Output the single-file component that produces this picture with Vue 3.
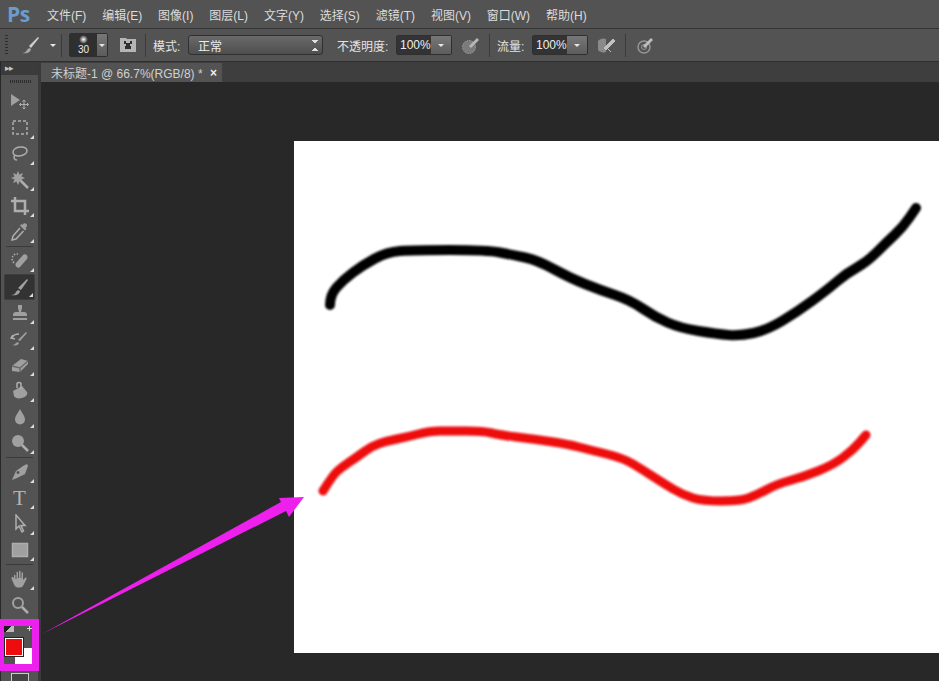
<script setup>
const menus = ['文件(F)', '编辑(E)', '图像(I)', '图层(L)', '文字(Y)', '选择(S)', '滤镜(T)', '视图(V)', '窗口(W)', '帮助(H)']

// 工具栏图标 viewBox 0 0 20 20，d 为填充，s 为描边
const tools = [
  { d: 'M1 2l9 6-9 6z', s: 'M14 8v9M9.500 12.500h9M12.500 9.500L14 8l1.500 1.500M12.500 15.500L14 17l1.500-1.500M11 11l-1.500 1.500L11 14M17 11l1.500 1.500L17 14', thin: true, more: false },
  { s: 'M3 3h14v13H3z', dash: '3 2', more: true },
  { s: 'M3 8c0-3 4-5 8-5s6 1.500 6 4-4 5-8 5-6-1-6-4zM5 11c-2 2-1 5 2 5', more: true },
  { d: 'M8 1l1.500 3.500L13 3l-1.500 3.500L15 8l-3.500 1.500L13 13l-3.500-1.500L8 15l-1.500-3.500L3 13l1.500-3.500L1 8l3.500-1.500L3 3l3.500 1.500z', s: 'M11 11l7 7', wide: true, more: true },
  { s: 'M5 1v14h14M1 5h14v14', wide: true, more: true },
  { d: 'M13 2c1.500-1.500 4-.5 4 1.500 0 1-.5 1.500-1.500 2.500l1 1-1.500 1.500-5-5L11.500 2l1 1z', s: 'M10 6L3 14l-1 4 4-1 7.500-8', more: true, sepAfter: true },
  { d: 'M6 12l7-8c2-2 6 1 4 4l-7 8c-2 2-6-1-4-4z', s: 'M4 12C0 8 3 2 8 3', dash: '1.500 1.500', more: true },
  { d: 'M1 18c3 0 4-1 5-3 1-2 3-2 4-1-.5 3-3 5-9 4zM11 13l-3-2 9-9 1 1z', more: true, active: true },
  { d: 'M8 2h4v3l-1 4h3c2 0 3 1 3 3v1H3v-1c0-2 1-3 3-3h3L8 5zM3 15h14v2H3z', more: true },
  { d: 'M2 16c2 0 3-1 4-2 1-1 2-1 3 0-.5 2-3 3-7 2zM10 12l-2-1 8-8 1 1z', s: 'M2 9c1-3 4-4 7-4M3 6L1 9l4 1', more: true },
  { d: 'M2 11l9-7 7 2v3l-8 8-8-1z', s: 'M2 11l8 2 8-7M10 13v4', dark: true, more: true },
  { d: 'M3 10l9-5 5 6c1 2-1 5-5 6-4 1-7 0-8-2z', s: 'M7 7V3c0-2 4-2 4 0v5', more: true },
  { d: 'M10 2c2 4 5 7 5 10.500a5 5 0 0 1-10 0C5 9 8 6 10 2z', more: true },
  { d: 'M8 2a6 6 0 1 1 0 12A6 6 0 0 1 8 2z', s: 'M12 12l6 6', wide: true, more: true, sepAfter: true },
  { d: 'M17 2l1 2-3 8-8 4-5 2 4-9 7-5zM8 9a1.500 1.500 0 1 0 .01 0z', more: true },
  { text: 'T', more: true },
  { s: 'M6 1v14l3-3 3 6 1.500-1-2.500-5.500h4z', more: true },
  { d: 'M3 4h14v12H3z', s: 'M2.500 3.500h15v13h-15z', more: true, sepAfter: true },
  { d: 'M4 10V6.500c0-1 1.500-1 1.500 0V10h1V3.500c0-1 1.500-1 1.500 0V9h1V2.500c0-1 1.500-1 1.500 0V9h1V4c0-1 1.500-1 1.500 0v7l2-2c1-1 2 0 1.500 1l-3 6c-1 2-2 2.500-4 2.500H8c-2 0-3-1-4-3L1.500 9.500c-.5-1 1-2 2-1z', more: true },
  { d: 'M8 2a6 6 0 1 1 0 12A6 6 0 0 1 8 2zm0 2a4 4 0 1 0 0 8 4 4 0 0 0 0-8z', s: 'M12 12l6 6', wide: true, more: false }
]

// 笔触坐标，取平滑中点
const smooth = (pts) => {
  let d = `M${pts[0][0]} ${pts[0][1]}`
  for (let i = 1; i < pts.length - 1; i++) {
    const mx = (pts[i][0] + pts[i + 1][0]) / 2
    const my = (pts[i][1] + pts[i + 1][1]) / 2
    d += ` Q${pts[i][0]} ${pts[i][1]} ${mx} ${my}`
  }
  const last = pts[pts.length - 1]
  return d + ` L${last[0]} ${last[1]}`
}

const blackStroke = smooth([[330, 305], [330, 295], [343, 280], [363, 265], [387, 252], [413, 250], [487, 250], [513, 255], [537, 260], [570, 278], [600, 290], [630, 300], [655, 317], [680, 328], [717, 334], [740, 336], [767, 330], [797, 312], [827, 290], [847, 273], [867, 262], [887, 242], [903, 227], [916, 208]])
const redStroke = smooth([[323, 491], [333, 475], [342, 467], [357, 457], [372, 446], [387, 441], [407, 437], [430, 431], [450, 431], [483, 431], [500, 435], [533, 439], [567, 444], [590, 450], [623, 458], [643, 470], [663, 483], [683, 495], [703, 501], [740, 501], [757, 495], [777, 484], [803, 477], [833, 465], [853, 450], [866, 435]])
</script>

<template>
  <div class="app">
    <header class="menu-bar">
      <span class="logo">Ps</span>
      <ul class="menu">
        <li v-for="item in menus" :key="item">{{ item }}</li>
      </ul>
    </header>

    <div class="options">
      <span class="grip"></span>
      <svg class="opt-brush" viewBox="0 0 20 20" width="20" height="20">
        <path d="M1 18c3 0 4-1 5-3 1-2 3-2 4-1-.5 3-3 5-9 4z" fill="#a8a8a8" />
        <path d="M10 13l-2-2 9-9 1 1z" fill="#cfcfcf" />
      </svg>
      <span class="caret caret-brush"></span>
      <span class="sep"></span>
      <div class="preset">
        <div class="preset-main">
          <span class="dot"></span>
          <span class="size">30</span>
        </div>
        <div class="drop"><span class="caret"></span></div>
      </div>
      <svg class="opt-folder" viewBox="0 0 16 16" width="16" height="16">
        <path d="M0 1h6l1 1h9v13H0z" fill="#b5b5b5" />
        <path d="M4 4h2v2h4V4h2v3h-2v2h1v3H5V9h1V7H4z" fill="#2e2e2e" />
      </svg>
      <span class="sep sep-b"></span>
      <span class="label label-mode">模式:</span>
      <div class="select">
        <span>正常</span>
        <span class="updown"></span>
      </div>
      <span class="label label-opacity">不透明度:</span>
      <div class="num">
        <span class="num-val">100%</span>
        <span class="drop"><span class="caret"></span></span>
      </div>
      <svg class="opt-icon ic-a" viewBox="0 0 18 18" width="18" height="18">
        <circle cx="7" cy="11" r="6.500" fill="#7b7b7b" stroke="#a0a0a0" stroke-dasharray="1.500 1" />
        <path d="M7 10l8-8 2 2-8 8z" fill="#b8b8b8" />
      </svg>
      <span class="sep sep-c"></span>
      <span class="label label-flow">流量:</span>
      <div class="num">
        <span class="num-val">100%</span>
        <span class="drop"><span class="caret"></span></span>
      </div>
      <svg class="opt-icon ic-b" viewBox="0 0 18 18" width="18" height="18">
        <path d="M8 3a7 7 0 1 0 0 13z" fill="#8a8a8a" />
        <path d="M6 12l9-9 2 2-9 9zM10 13l3 3" fill="#c0c0c0" stroke="#c0c0c0" />
      </svg>
      <span class="sep sep-d"></span>
      <svg class="opt-icon ic-c" viewBox="0 0 18 18" width="18" height="18">
        <circle cx="8" cy="11" r="6" fill="none" stroke="#969696" stroke-width="1.500" />
        <circle cx="8" cy="11" r="2.500" fill="none" stroke="#969696" />
        <path d="M7 10l8-8 2 2-8 8z" fill="#bdbdbd" />
      </svg>
    </div>

    <div class="workspace">
      <aside class="toolbox">
        <div class="tool-head"><span class="arrows">▸▸</span></div>
        <div class="tool-grip"></div>
        <template v-for="(tool, i) in tools" :key="i">
          <div class="tool" :class="{ active: tool.active }">
            <span v-if="tool.text" class="tool-t">{{ tool.text }}</span>
            <svg v-else viewBox="0 0 20 20" width="20" height="20">
              <path v-if="tool.d" :d="tool.d" fill="#a0a0a0" fill-rule="evenodd" />
              <path
                v-if="tool.s"
                :d="tool.s"
                fill="none"
                :stroke="tool.dark ? '#6a6a6a' : '#aeaeae'"
                :stroke-width="tool.wide ? 2.500 : tool.thin ? 1 : 1.500"
                :stroke-dasharray="tool.dash"
              />
            </svg>
            <span v-if="tool.more" class="more"></span>
          </div>
          <div v-if="tool.sepAfter" class="tool-sep"></div>
        </template>
        <div class="colors">
          <span class="mini-default"></span>
          <span class="mini-swap"></span>
          <span class="bg-swatch"></span>
          <span class="fg-swatch"></span>
        </div>
        <div class="mask-btn"><span></span></div>
      </aside>
      <span class="gutter"></span>
      <main class="doc">
        <div class="tabs">
          <div class="tab">
            <span>未标题-1 @ 66.7%(RGB/8) *</span>
            <span class="close">×</span>
          </div>
        </div>
        <div class="stage">
          <div class="paper">
            <svg class="strokes" viewBox="294 141 645 512">
              <defs>
                <filter id="soft" x="-5%" y="-10%" width="110%" height="120%">
                  <feGaussianBlur stdDeviation="1.300" />
                </filter>
              </defs>
              <path :d="blackStroke" class="stroke-black" filter="url(#soft)" />
              <path :d="redStroke" class="stroke-red" filter="url(#soft)" />
            </svg>
          </div>
        </div>
      </main>
    </div>

    <!-- 标注：粉色框和箭头 -->
    <div class="mark-box"></div>
    <svg class="mark-arrow" viewBox="0 0 939 681">
      <polygon points="42,634 281,502 279,498 304,497 289,517 286,511" fill="#ee20ee" />
    </svg>
  </div>
</template>

<style>
html, body {
  margin: 0;
  background: #282828;
}
</style>

<style scoped>
.app {
  position: relative;
  width: 939px;
  height: 681px;
  overflow: hidden;
  display: flex;
  flex-direction: column;
  background: #282828;
  font-family: "Liberation Sans", "Noto Sans CJK SC", sans-serif;
  font-size: 12px;
  color: #dcdcdc;
}

.menu-bar {
  height: 28px;
  flex-shrink: 0;
  display: flex;
  align-items: center;
  background: #535353;
  border-bottom: 1px solid #333;
}

.logo {
  width: 47px;
  padding-left: 7px;
  box-sizing: border-box;
  font-family: "Open Sans", sans-serif;
  font-size: 21px;
  font-weight: 700;
  color: #6b9ccb;
  letter-spacing: -0.5px;
}

.menu {
  display: flex;
  gap: 15.900px;
  list-style: none;
  margin: 0;
  padding: 0;
}

.options {
  height: 32px;
  flex-shrink: 0;
  display: flex;
  align-items: center;
  background: #535353;
  border-bottom: 1px solid #2f2f2f;
}

.grip {
  width: 3px;
  height: 20px;
  margin-left: 5px;
  background: repeating-linear-gradient(#2e2e2e 0 1px, transparent 1px 3px);
}

.opt-brush {
  margin-left: 13px;
}

.caret {
  display: block;
  width: 0;
  height: 0;
  border-left: 3px solid transparent;
  border-right: 3px solid transparent;
  border-top: 3px solid #e6e6e6;
}

.caret-brush {
  margin-left: 9px;
}

.sep {
  width: 1px;
  height: 23px;
  margin-left: 5px;
  background: #3a3a3a;
}

.preset {
  display: flex;
  width: 39px;
  height: 24px;
  margin-left: 7px;
  border: 1px solid #2f2f2f;
  border-radius: 2px;
  overflow: hidden;
  box-sizing: border-box;
}

.preset-main {
  flex: 1;
  position: relative;
  background: #2f2f2f;
  text-align: center;
}

.dot {
  position: absolute;
  top: 1px;
  left: 9px;
  width: 9px;
  height: 9px;
  border-radius: 50%;
  background: radial-gradient(#fff, rgba(255, 255, 255, 0) 70%);
}

.size {
  display: block;
  padding-top: 10px;
  font-size: 10px;
  line-height: 12px;
  color: #eee;
}

.drop {
  display: flex;
  align-items: center;
  justify-content: center;
  width: 10px;
  background: linear-gradient(#777, #5c5c5c);
}

.opt-folder {
  margin-left: 12px;
}

.sep-b {
  margin-left: 9px;
}

.label {
  color: #e4e4e4;
  white-space: nowrap;
}

.label-mode {
  margin-left: 7px;
  width: 35px;
}

.select {
  width: 135px;
  height: 20px;
  box-sizing: border-box;
  display: flex;
  align-items: center;
  justify-content: space-between;
  padding: 0 4px 0 9px;
  border: 1px solid #303030;
  border-radius: 3px;
  background: linear-gradient(#6a6a6a, #4e4e4e);
  color: #eee;
}

.updown {
  width: 6px;
  height: 11px;
  background:
    linear-gradient(45deg, transparent 50%, #e0e0e0 50%) 0 0 / 3px 4px no-repeat,
    linear-gradient(-45deg, transparent 50%, #e0e0e0 50%) 3px 0 / 3px 4px no-repeat,
    linear-gradient(135deg, transparent 50%, #e0e0e0 50%) 0 7px / 3px 4px no-repeat,
    linear-gradient(-135deg, transparent 50%, #e0e0e0 50%) 3px 7px / 3px 4px no-repeat;
}

.label-opacity {
  margin-left: 14px;
  width: 59px;
}

.label-flow {
  margin-left: 7px;
  width: 35px;
}

.num {
  display: flex;
  width: 56px;
  height: 20px;
  box-sizing: border-box;
  border: 1px solid #2f2f2f;
  border-radius: 2px;
  overflow: hidden;
}

.num-val {
  flex: 1;
  background: #333;
  line-height: 18px;
  padding-left: 3px;
  color: #eee;
}

.num .drop {
  width: 20px;
}

.opt-icon {
  margin-left: 10px;
}

.sep-c {
  margin-left: 9px;
}

.sep-d {
  margin-left: 9px;
}

.workspace {
  flex: 1;
  display: flex;
  min-height: 0;
}

.toolbox {
  width: 37px;
  margin-left: 1px;
  background: #535353;
  display: flex;
  flex-direction: column;
}

.tool-head {
  height: 13px;
  flex-shrink: 0;
  background: #3b3b3b;
  display: flex;
  align-items: center;
}

.arrows {
  padding-left: 4px;
  font-size: 9px;
  line-height: 13px;
  color: #c8c8c8;
  letter-spacing: -1px;
}

.tool-grip {
  height: 3px;
  flex-shrink: 0;
  margin: 5px 7px 6px 9px;
  background: repeating-linear-gradient(90deg, #2c2c2c 0 1px, transparent 1px 2px);
}

.tool {
  position: relative;
  height: 26px;
  flex-shrink: 0;
  display: flex;
  align-items: center;
  justify-content: center;
  box-sizing: border-box;
  margin: 0 3px;
}

.tool.active {
  background: #333;
  border: 1px solid #3e3e3e;
  border-radius: 2px;
}

.tool-t {
  font-family: "Liberation Serif", serif;
  font-size: 21px;
  color: #b4b4b4;
}

.more {
  position: absolute;
  right: 1px;
  bottom: 2px;
  width: 0;
  height: 0;
  border-left: 4px solid transparent;
  border-bottom: 4px solid #dcdcdc;
}

.tool-sep {
  height: 1px;
  flex-shrink: 0;
  margin: 1px 5px;
  background: #3a3a3a;
}

.colors {
  position: relative;
  flex-shrink: 0;
  height: 52px;
  margin-top: 1px;
}

.mini-default {
  position: absolute;
  top: 7px;
  left: 3px;
  width: 10px;
  height: 6px;
  background: linear-gradient(135deg, #1c1c1c 50%, #bbb 50%);
}

.mini-swap {
  position: absolute;
  top: 7px;
  left: 26px;
  width: 5px;
  height: 5px;
  background:
    linear-gradient(#ddd, #ddd) 2px 0 / 1px 5px no-repeat,
    linear-gradient(#ddd, #ddd) 0 2px / 5px 1px no-repeat;
}

.fg-swatch {
  position: absolute;
  top: 19px;
  left: 4px;
  width: 16px;
  height: 16px;
  border: 1px solid #fff;
  outline: 1px solid #222;
  background: #ee0c0f;
}

.bg-swatch {
  position: absolute;
  top: 29px;
  left: 14px;
  width: 17px;
  height: 16px;
  background: #fff;
}

.mask-btn {
  display: flex;
  justify-content: center;
  flex-shrink: 0;
  padding-top: 2px;
}

.mask-btn span {
  width: 16px;
  height: 12px;
  border: 1px solid #ccc;
  background: #444;
}

.gutter {
  width: 3px;
  background: #3a3a3a;
}

.doc {
  flex: 1;
  min-width: 0;
  display: flex;
  flex-direction: column;
}

.tabs {
  height: 20px;
  flex-shrink: 0;
  display: flex;
  background: #3e3e3e;
}

.tab {
  width: 181px;
  margin-top: 1px;
  display: flex;
  align-items: center;
  justify-content: space-between;
  box-sizing: border-box;
  padding: 0 5px 0 10px;
  background: #535353;
  color: #d0d0d0;
  font-size: 12px;
  white-space: nowrap;
}

.close {
  color: #eee;
  font-weight: 700;
}

.stage {
  flex: 1;
  background: #282828;
  padding: 59px 0 28px 253px;
  display: flex;
  min-height: 0;
}

.paper {
  flex: 1;
  background: #fff;
}

.strokes {
  display: block;
  width: 100%;
  height: 100%;
}

.stroke-black,
.stroke-red {
  fill: none;
  stroke-linecap: round;
  stroke-linejoin: round;
}

.stroke-black {
  stroke: #000;
  stroke-width: 10;
}

.stroke-red {
  stroke: #ee0a10;
  stroke-width: 9;
}

.mark-box {
  position: absolute;
  left: 0;
  top: 619px;
  width: 39px;
  height: 52px;
  box-sizing: border-box;
  border-style: solid;
  border-color: #ee20ee;
  border-width: 7px 7px 7px 4px;
}

.mark-arrow {
  position: absolute;
  left: 0;
  top: 0;
  width: 939px;
  height: 681px;
  pointer-events: none;
}
</style>
